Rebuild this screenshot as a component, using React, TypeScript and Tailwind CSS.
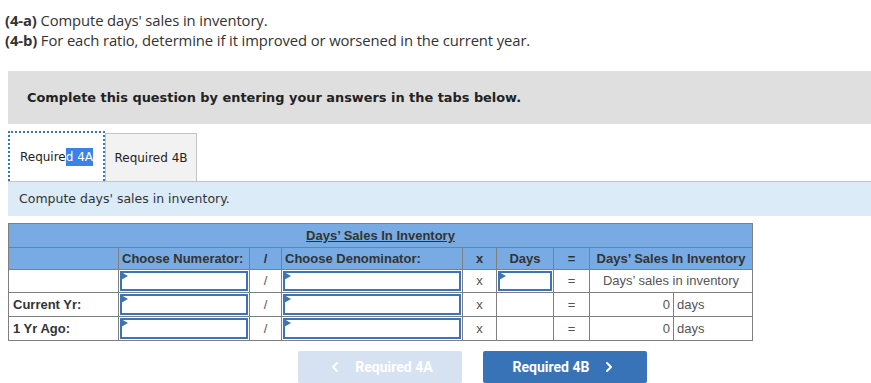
import React from "react";
import { ChevronLeft, ChevronRight } from "lucide-react";

const cell = "border border-[#7f7f7f] p-0";

function InputBox({ h }: { h: string }) {
  return (
    <div className={`relative ${h} w-full border-2 border-[#3d74b8] bg-white`}>
      <span className="absolute -left-[1px] -top-[1px] h-0 w-0 border-l-[7px] border-t-[4px] border-b-[4px] border-l-[#3d74b8] border-t-transparent border-b-transparent" />
    </div>
  );
}

function Row({ label, days, result, h, bh }: { label: string; days?: boolean; result: React.ReactNode; h: string; bh: string }) {
  return (
    <tr className={h}>
      <td className={`${cell} px-1 font-bold text-[#333]`}>{label}</td>
      <td className={`${cell} p-[1px]`}><InputBox h={bh} /></td>
      <td className={`${cell} text-center text-[#555]`}>/</td>
      <td className={`${cell} p-[1px]`}><InputBox h={bh} /></td>
      <td className={`${cell} text-center text-[#555]`}>x</td>
      <td className={`${cell} p-[1px]`}>{days ? <InputBox h={bh} /> : null}</td>
      <td className={`${cell} text-center text-[#555]`}>=</td>
      {result}
    </tr>
  );
}

export default function App() {
  return (
    <div className="w-[871px] h-[383px] overflow-hidden bg-white">
      <div className="pl-[5px] pt-[10px] font-['Open_Sans',sans-serif] text-[14.8px] leading-[20px] tracking-[-0.1px] text-[#333]">
        <p><b>(4-a)</b> Compute days' sales in inventory.</p>
        <p><b>(4-b)</b> For each ratio, determine if it improved or worsened in the current year.</p>
      </div>

      <div className="ml-[8px] mt-[21px] flex h-[53px] items-center bg-[#dfdfdf] pl-[19px] font-['DejaVu_Sans',sans-serif] text-[12.9px] font-bold text-[#222]">
        Complete this question by entering your answers in the tabs below.
      </div>

      <div className="ml-[8px] mt-[7px] font-['DejaVu_Sans',sans-serif] text-[12px] text-[#222]">
        <div className="flex h-[50px] items-end">
          <div className="flex h-[50px] w-[97px] items-center justify-center border-2 border-dotted border-b-0 border-[#3d74b8] bg-white">
            <span>Require</span><span className="bg-[#3b82e8] text-white">d 4A</span>
          </div>
          <div className="flex h-[48px] w-[92px] items-center justify-center border border-b-0 border-[#c4c4c4] bg-[#f2f2f2]">
            Required 4B
          </div>
          <div className="flex-1" />
        </div>
        <div className="flex h-[35px] items-center border-t border-[#c4c4c4] bg-[#dcebf8] pl-[11px] text-[12.5px] text-[#333]">
          Compute days' sales in inventory.
        </div>
      </div>

      <table className="ml-[8px] mt-[7px] border-collapse font-['Liberation_Sans',sans-serif] text-[13px] text-[#333]">
        <colgroup>
          <col className="w-[110px]" />
          <col className="w-[131px]" />
          <col className="w-[32px]" />
          <col className="w-[181px]" />
          <col className="w-[34px]" />
          <col className="w-[57px]" />
          <col className="w-[36px]" />
          <col className="w-[84px]" />
          <col className="w-[79px]" />
        </colgroup>
        <tbody>
          <tr className="h-[24px] bg-[#78abe3]">
            <td colSpan={9} className={`${cell} text-center font-bold underline`}>Days’ Sales In Inventory</td>
          </tr>
          <tr className="h-[22px] bg-[#78abe3] font-bold">
            <td className={cell} />
            <td className={`${cell} px-[3px]`}>Choose Numerator:</td>
            <td className={`${cell} text-center`}>/</td>
            <td className={`${cell} px-[3px]`}>Choose Denominator:</td>
            <td className={`${cell} text-center`}>x</td>
            <td className={`${cell} text-center`}>Days</td>
            <td className={`${cell} text-center`}>=</td>
            <td colSpan={2} className={`${cell} text-center`}>Days’ Sales In Inventory</td>
          </tr>
          <Row
            label=""
            days
            h="h-[23px]"
            bh="h-[20px]"
            result={<td colSpan={2} className={`${cell} text-center text-[#555]`}>Days’ sales in inventory</td>}
          />
          <Row
            label="Current Yr:"
            h="h-[24px]"
            bh="h-[21px]"
            result={
              <>
                <td className={`${cell} pr-[3px] text-right text-[#555]`}>0</td>
                <td className={`${cell} pl-[3px] text-[#555]`}>days</td>
              </>
            }
          />
          <Row
            label="1 Yr Ago:"
            h="h-[24px]"
            bh="h-[21px]"
            result={
              <>
                <td className={`${cell} pr-[3px] text-right text-[#555]`}>0</td>
                <td className={`${cell} pl-[3px] text-[#555]`}>days</td>
              </>
            }
          />
        </tbody>
      </table>

      <div className="mt-[10px] flex gap-[21px] pl-[298px] font-['Roboto',sans-serif] text-[14px] font-bold text-white">
        <button className="flex h-[32px] w-[164px] items-center justify-center gap-[12px] rounded-[2px] bg-[#d6e2f1]">
          <ChevronLeft size={16} strokeWidth={3} /> Required 4A
        </button>
        <button className="flex h-[32px] w-[164px] items-center justify-center gap-[12px] rounded-[2px] bg-[#3873b8]">
          Required 4B <ChevronRight size={16} strokeWidth={3} />
        </button>
      </div>
    </div>
  );
}
